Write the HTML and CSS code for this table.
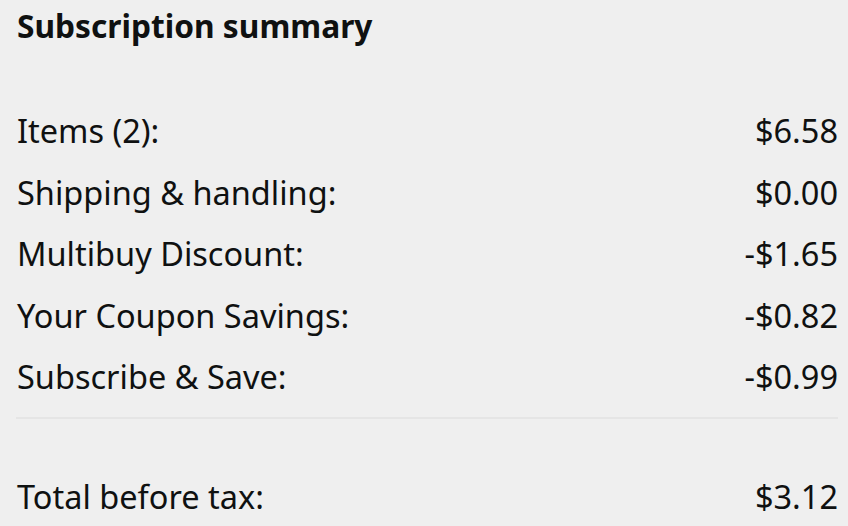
FILE: index.html
```html
<!DOCTYPE html>
<html>
<head>
<meta charset="utf-8">
<link rel="stylesheet" href="styles.css">
</head>
<body>
<div class="summary">
  <h2 class="title">Subscription summary</h2>
  <div class="rows">
    <div class="row"><span>Items (2):</span><span>$6.58</span></div>
    <div class="row"><span>Shipping &amp; handling:</span><span>$0.00</span></div>
    <div class="row"><span>Multibuy Discount:</span><span>-$1.65</span></div>
    <div class="row"><span>Your Coupon Savings:</span><span>-$0.82</span></div>
    <div class="row"><span>Subscribe &amp; Save:</span><span>-$0.99</span></div>
  </div>
  <hr class="sep">
  <div class="row total"><span>Total before tax:</span><span>$3.12</span></div>
</div>
</body>
</html>
```
FILE: styles.css
```css
html, body {
  margin: 0;
  padding: 0;
  background: #efefef;
}
body {
  font-family: "Noto Sans", "Open Sans", sans-serif;
  color: #0f1111;
}
.summary {
  padding: 0 10px 0 16px;
}
.title {
  margin: 0 0 0 1px;
  font-size: 31.7px;
  font-weight: 700;
  line-height: 52px;
}
.rows {
  margin-top: 48px;
  padding-left: 1px;
  display: flex;
  flex-direction: column;
}
.row {
  display: flex;
  justify-content: space-between;
  font-size: 32.5px;
  line-height: 61.5px;
}
.total {
  padding-left: 1px;
}
.sep {
  border: 0;
  border-top: 2px solid #e5e5e5;
  margin: 9px 0 47px;
}
```
